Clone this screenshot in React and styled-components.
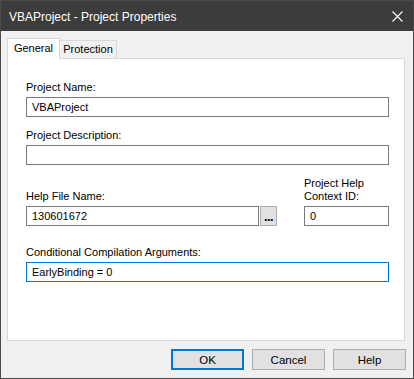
import React from "react";
import styled, { createGlobalStyle } from "styled-components";

const GlobalStyle = createGlobalStyle`
  html, body {
    margin: 0;
    padding: 0;
    background: #f0f0f0;
  }
  * {
    box-sizing: border-box;
  }
`;

const App = () => {
  return (
    <>
      <GlobalStyle />
      <Window>
        <TitleBar>
          <Title>VBAProject - Project Properties</Title>
          <CloseIcon width="11" height="11" viewBox="0 0 11 11">
            <path d="M0.5 0.5 L10.5 10.5 M10.5 0.5 L0.5 10.5" stroke="#ffffff" strokeWidth="1.1" />
          </CloseIcon>
        </TitleBar>
        <Body>
          <TabRow>
            <Tab $active>General</Tab>
            <Tab>Protection</Tab>
          </TabRow>
          <Panel>
            <Field>
              <Label>Project Name:</Label>
              <Input>VBAProject</Input>
            </Field>
            <Field $gap={12}>
              <Label>Project Description:</Label>
              <Input />
            </Field>
            <HelpRow>
              <Field $width={251}>
                <Label>Help File Name:</Label>
                <InputGroup>
                  <Input $grow>130601672</Input>
                  <Browse>...</Browse>
                </InputGroup>
              </Field>
              <Field $width={85}>
                <Label>
                  Project Help
                  <br />
                  Context ID:
                </Label>
                <Input>0</Input>
              </Field>
            </HelpRow>
            <Field $gap={20}>
              <Label>Conditional Compilation Arguments:</Label>
              <Input $focused>EarlyBinding = 0</Input>
            </Field>
          </Panel>
          <ButtonRow>
            <Button $default>OK</Button>
            <Button>Cancel</Button>
            <Button>Help</Button>
          </ButtonRow>
        </Body>
      </Window>
    </>
  );
};

const Window = styled.div`
  width: 414px;
  height: 379px;
  border: 1px solid #4a4a4a;
  background: #f0f0f0;
  display: flex;
  flex-direction: column;
  font-family: "Liberation Sans", Arial, sans-serif;
  font-size: 11px;
  color: #000;
`;

const TitleBar = styled.div`
  height: 30px;
  flex-shrink: 0;
  background: #3c3c3c;
  display: flex;
  align-items: center;
  justify-content: space-between;
  padding: 0 10px 0 8px;
`;

const Title = styled.div`
  color: #ffffff;
  font-size: 12px;
  padding-top: 1px;
`;

const CloseIcon = styled.svg`
  display: block;
`;

const Body = styled.div`
  flex: 1;
  display: flex;
  flex-direction: column;
  padding: 7px 7px 8px 6px;
`;

const TabRow = styled.div`
  display: flex;
  align-items: flex-end;
  height: 20px;
`;

const Tab = styled.div`
  position: relative;
  z-index: ${(p) => (p.$active ? 1 : 0)};
  height: ${(p) => (p.$active ? "21px" : "18px")};
  margin-bottom: ${(p) => (p.$active ? "-1px" : "0")};
  margin-left: ${(p) => (p.$active ? "0" : "-1px")};
  width: ${(p) => (p.$active ? "53px" : "58px")};
  background: ${(p) => (p.$active ? "#ffffff" : "#f0f0f0")};
  border: 1px solid #d9d9d9;
  border-bottom: none;
  display: flex;
  justify-content: center;
  padding-top: ${(p) => (p.$active ? "3px" : "2px")};
  line-height: 13px;
`;

const Panel = styled.div`
  height: 283px;
  margin-right: 1px;
  background: #ffffff;
  border: 1px solid #d9d9d9;
  padding: 22px 15px 0 18px;
  display: flex;
  flex-direction: column;
`;

const Field = styled.div`
  display: flex;
  flex-direction: column;
  margin-top: ${(p) => (p.$gap ? `${p.$gap}px` : "0")};
  width: ${(p) => (p.$width ? `${p.$width}px` : "auto")};
`;

const Label = styled.div`
  line-height: 13px;
  margin-bottom: 3px;
`;

const Input = styled.div`
  flex: ${(p) => (p.$grow ? "1 1 auto" : "none")};
  height: 20px;
  border: 1px solid ${(p) => (p.$focused ? "#0078d7" : "#7a7a7a")};
  background: #ffffff;
  padding: 0 5px;
  line-height: 18px;
  white-space: nowrap;
`;

const InputGroup = styled.div`
  display: flex;
  gap: 1px;
`;

const Browse = styled.div`
  width: 17px;
  height: 20px;
  flex-shrink: 0;
  background: #e1e1e1;
  border: 1px solid #adadad;
  display: flex;
  justify-content: center;
  line-height: 20px;
  font-size: 13px;
  font-weight: bold;
  letter-spacing: -0.6px;
  overflow: hidden;
`;

const HelpRow = styled.div`
  display: flex;
  justify-content: space-between;
  align-items: flex-end;
  margin-top: 12px;
`;

const ButtonRow = styled.div`
  display: flex;
  justify-content: flex-end;
  gap: 8px;
  margin-top: 8px;
`;

const Button = styled.div`
  width: 73px;
  height: 21px;
  background: #e1e1e1;
  border: ${(p) => (p.$default ? "2px solid #0078d7" : "1px solid #adadad")};
  display: flex;
  align-items: center;
  justify-content: center;
  font-size: 11.5px;
`;

export default App;
